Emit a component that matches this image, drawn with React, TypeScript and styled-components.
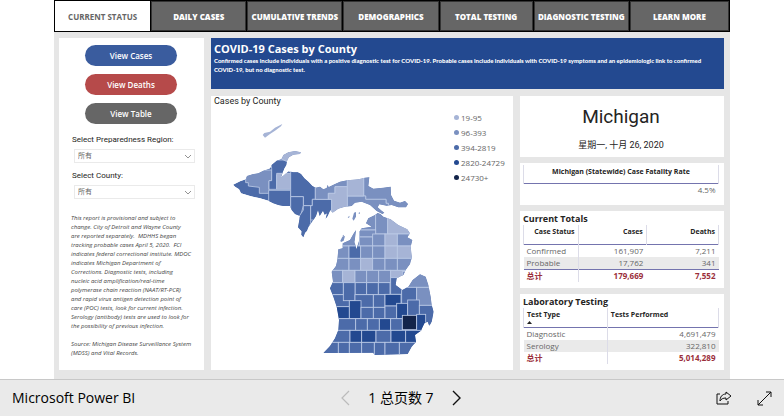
import React from "react";
import styled, { createGlobalStyle } from "styled-components";

const SANS = `"Open Sans", "Noto Sans", "Noto Sans CJK SC", sans-serif`;
const DIN = `Roboto, "Noto Sans CJK SC", sans-serif`;

const LEVELS = ["#a6b4d6", "#7a90c0", "#4c6ba9", "#234990", "#13244a"];

const GlobalStyle = createGlobalStyle`
  * { box-sizing: border-box; }
  body { margin: 0; background: #fff; font-family: ${SANS}; color: #252423; }
  button, select { font-family: inherit; margin: 0; cursor: pointer; }
  h1, h2, p, ul { margin: 0; padding: 0; }
`;

const Page = styled.div`
  display: flex;
  flex-direction: column;
  min-height: 100vh;
`;

const Report = styled.div`
  flex: 1;
  margin: 0 54px;
  background: #e6e6e6;
`;

const Tabs = styled.nav`
  display: grid;
  grid-template-columns: 95fr 95fr 95fr 95fr 93fr 95fr 99fr;
  gap: 1px;
  height: 32px;
  padding: 1px;
  background: #000;
`;

const Tab = styled.button<{ $active?: boolean }>`
  min-width: 0;
  border: 1px solid ${(p) => (p.$active ? "#fff" : "#333")};
  padding: 0;
  background: ${(p) => (p.$active ? "#fff" : "#666")};
  color: ${(p) => (p.$active ? "#666" : "#fff")};
  font-size: 8px;
  font-weight: ${(p) => (p.$active ? 700 : 800)};
  white-space: nowrap;
`;

const Main = styled.main`
  display: grid;
  grid-template-columns: 145fr 302fr 204fr;
  grid-template-rows: auto 1fr;
  gap: 7px;
  padding: 6px 6px 8px 5px;
`;

const Sidebar = styled.aside`
  grid-row: 1 / 3;
  display: flex;
  flex-direction: column;
  padding: 7px 9px 0 13px;
  background: #fff;
`;

const ViewButtons = styled.div`
  display: flex;
  flex-direction: column;
  gap: 8px;
  padding: 0 18px 0 13px;
`;

const ViewButton = styled.button<{ $color: string }>`
  height: 21px;
  border: 0;
  border-radius: 11px;
  padding: 0;
  background: ${(p) => p.$color};
  color: #fff;
  font-size: 8px;
  font-weight: 600;
`;

const Field = styled.div`
  display: flex;
  flex-direction: column;
  gap: 4px;
  margin-top: 8px;
`;

const FirstField = styled(Field)`
  margin-top: 11px;
`;

const FieldLabel = styled.label`
  font-family: ${DIN};
  font-size: 8px;
  line-height: 10px;
  color: #252423;
`;

const SelectBox = styled.div`
  display: grid;
  align-items: center;
  margin-left: 2px;
  & > * { grid-area: 1 / 1; }
  svg { justify-self: end; margin-right: 3px; pointer-events: none; }
`;

const Select = styled.select`
  appearance: none;
  width: 100%;
  height: 14px;
  border: 1px solid #eaeaea;
  border-radius: 0;
  padding: 0 3px;
  background: #fff;
  color: #666;
  font-size: 7px;
  line-height: 12px;
`;

const Notes = styled.p`
  margin-top: 15px;
  margin-right: -8px;
  margin-left: -1px;
  font-size: 6px;
  font-style: italic;
  line-height: 9px;
  color: #444;
  white-space: pre-line;

  & + & { margin-top: 9px; }
`;

const Banner = styled.header`
  grid-column: 2 / 4;
  min-height: 51px;
  padding: 4px 0 4px 3px;
  background: #234990;
  color: #fff;
`;

const BannerTitle = styled.h1`
  font-size: 11px;
  font-weight: 700;
  line-height: 14px;
`;

const BannerText = styled.p`
  font-family: Lato, ${SANS};
  font-size: 6px;
  font-weight: 900;
  line-height: 9px;
`;

const Term = styled.span`
  white-space: nowrap;
`;

const MapPanel = styled.section`
  padding: 0 3px;
  background: #fff;
`;

const MapTitle = styled.h2`
  font-family: ${DIN};
  font-size: 9px;
  font-weight: 400;
  line-height: 11px;
  color: #252423;
`;

const MapBody = styled.div`
  display: flex;
  gap: 14px;
  margin-top: 3px;
  padding-left: 11px;
`;

const Legend = styled.ul`
  list-style: none;
  font-size: 8px;
  line-height: 15px;
  color: #666;
  white-space: nowrap;
`;

const LegendItem = styled.li<{ $color: string }>`
  display: flex;
  align-items: center;
  gap: 2px;
  &::before {
    content: "";
    width: 5px;
    height: 5px;
    border-radius: 50%;
    background: ${(p) => p.$color};
  }
`;

const Cards = styled.div`
  display: flex;
  flex-direction: column;
  gap: 6px;
`;

const Card = styled.section<{ $height: number }>`
  min-height: ${(p) => p.$height}px;
  padding: 2px 5px 0 3px;
  background: #fff;
`;

const StateCard = styled(Card)`
  display: flex;
  flex-direction: column;
  align-items: center;
  padding-top: 9px;
  font-family: ${DIN};
`;

const StateName = styled.h2`
  font-size: 19px;
  font-weight: 400;
  line-height: 24px;
`;

const ReportDate = styled.p`
  margin-top: 9px;
  font-size: 9px;
  line-height: 14px;
`;

const CardTitle = styled.h2`
  font-size: 9px;
  font-weight: 700;
  line-height: 12px;
`;

const Table = styled.table`
  width: 100%;
  border-collapse: collapse;
  table-layout: fixed;
  font-size: 8px;
  line-height: 12px;
  color: #666;

  th, td { padding: 0 3px; text-align: right; font-weight: 400; }
  th:first-child { text-align: left; }
  th + td, th + th { border-left: 1px solid #dcdce8; }
`;

const HeadRow = styled.tr<{ $height: number }>`
  height: ${(p) => p.$height}px;
  border-bottom: 1px solid #7474ae;
  color: #252423;
  font-size: 7px;
  vertical-align: top;
  && th { font-weight: 700; }
  && th:first-child { border-left: 1px solid #dcdce8; }
  && th:last-child { border-right: 1px solid #dcdce8; }
`;

const HeadCell = styled.th<{ $align: string; $width?: string }>`
  width: ${(p) => p.$width ?? "auto"};
  &&& { text-align: ${(p) => p.$align}; padding-top: 1px; }
`;

const BodyRow = styled.tr<{ $shaded?: boolean }>`
  background: ${(p) => (p.$shaded ? "#eaeaea" : "transparent")};
`;

const TotalRow = styled.tr<{ $ruled?: boolean }>`
  border-top: ${(p) => (p.$ruled ? "1px solid #7474ae" : "0")};
  color: #9b2f3b;
  && th, && td { font-weight: 700; }
`;

const SortMark = styled.svg`
  display: block;
`;

const Footer = styled.footer`
  display: grid;
  grid-template-columns: 1fr auto 1fr;
  align-items: center;
  height: 37px;
  border-top: 1px solid #c8c8c8;
  padding: 0 12px;
  background: #eaeaea;
  color: #000;
`;

const Brand = styled.a`
  color: inherit;
  font-size: 14px;
  line-height: 18px;
  text-decoration: none;
`;

const Pager = styled.div`
  display: flex;
  align-items: center;
  gap: 18px;
  margin-left: 18px;
  font-size: 14px;
  line-height: 18px;
`;

const IconButton = styled.button`
  display: flex;
  border: 0;
  padding: 0;
  background: none;
`;

const Actions = styled.div`
  display: flex;
  justify-content: flex-end;
  gap: 25px;
`;

const UPPER =
  "M24 224 45 214 62 208 66 198 85 192 100 190 115 182 135 175 140 165 155 152 170 146 175 135 190 127 210 123 228 127 225 132 205 134 192 142 186 152 184 165 178 175 172 190 167 205 178 194 190 184 205 187 218 187 228 192 238 205 250 215 262 228 272 233 285 230 295 238 307 233 330 222 345 215 367 211 400 208 420 203 433 202 430 228 445 236 475 233 497 230 498 255 507 272 525 278 540 273 549 282 543 292 520 292 500 285 485 287 463 283 458 292 470 302 478 308 472 312 455 303 435 285 410 275 390 278 380 288 360 290 340 296 323 308 316 300 308 318 302 326 306 310 299 314 294 302 284 318 279 300 273 318 262 335 250 352 246 362 240 368 235 382 229 374 230 364 219 352 222 335 225 318 210 312 200 300 195 288 175 288 160 285 145 280 130 272 105 265 75 258 48 250 42 238 30 230Z";
const LOWER =
  "M450 315 458 309 466 312 475 320 497 328 520 345 547 358 555 370 547 382 562 390 557 410 561 445 558 450 555 462 542 480 535 495 515 505 512 525 532 540 550 530 563 510 585 493 602 500 610 525 617 560 620 585 626 605 620 635 613 648 608 635 598 640 588 662 570 675 573 695 560 710 548 732 448 735 445 728 295 729 315 708 330 685 340 660 342 630 335 590 325 560 315 535 324 515 320 485 335 465 330 480 337 450 340 418 353 415 353 400 375 390 385 372 393 360 390 385 386 410 389 396 394 418 403 390 403 365 410 355 440 350 423 340 430 325Z";
const ISLE_ROYALE = "M113 75 118 69 135 65 150 53 172 42 168 49 150 62 135 72 120 83Z";
const ISLANDS =
  "M382 326 387 308 393 306 393 320 386 332ZM368 322 374 317 372 324ZM346 392 352 380 360 378 356 392 348 396ZM305 234 307 224 312 232 306 238ZM400 310 404 306 405 312ZM352 378 357 374 356 380Z";

const UPPER_COUNTIES: [number, string][] = [
  [1, "M62 180H140V212H132V250H103V232L70 228V218H62Z"],
  [2, "M136 150H190L172 205 155 195V238H132V212H140V175Z"],
  [0, "M168 146 186 155 240 135V115H165Z"],
  [0, "M155 190H205V205H197V238H155Z"],
  [2, "M131 241H197V300H131Z"],
  [2, "M197 180H271V268H262V287H235V260H197Z"],
  [2, "M197 260H235V287L225 325H197Z"],
  [2, "M235 287H257V340L235 390H215V330L235 300Z"],
  [2, "M262 268H320V330H257V287H262Z"],
  [1, "M271 200H367V230H330V250H310V268H271Z"],
  [1, "M416 200H560V300H490V280H483V268H422V258H416Z"],
  [1, "M367 258H422V268H483V280H490V320H367Z"],
  [0, "M310 250H330V230H367V290L320 315V268H310Z"],
  [0, "M367 200H416V258H367Z"],
];

// Each entry: legend level, left, top, width, height.
const LOWER_COUNTIES: [number, number, number, number, number][] = [
  [1, 403, 300, 49, 60], [1, 452, 300, 36, 72], [0, 488, 320, 80, 52],
  [1, 403, 360, 49, 21], [1, 340, 355, 63, 53], [1, 403, 381, 40, 27],
  [1, 443, 372, 37, 36], [0, 480, 372, 37, 36], [1, 517, 372, 50, 36],
  [1, 335, 408, 37, 37], [2, 372, 408, 35, 37], [1, 407, 408, 36, 37],
  [1, 443, 408, 37, 37], [0, 480, 408, 37, 37], [0, 517, 408, 50, 37],
  [1, 315, 445, 57, 36], [1, 372, 445, 35, 36], [0, 407, 445, 36, 36],
  [1, 443, 445, 37, 36], [1, 480, 445, 37, 36], [1, 517, 445, 50, 36],
  [1, 310, 481, 43, 37], [0, 353, 481, 37, 37], [1, 390, 481, 35, 37],
  [1, 425, 481, 36, 37], [1, 461, 481, 36, 37], [0, 497, 481, 50, 22],
  [2, 310, 518, 45, 36], [2, 390, 518, 35, 36], [2, 425, 518, 35, 36],
  [2, 460, 518, 35, 36], [2, 497, 503, 34, 50], [2, 320, 554, 53, 36],
  [2, 355, 518, 35, 54], [2, 390, 554, 55, 38], [2, 445, 554, 35, 38],
  [3, 480, 553, 48, 35], [1, 532, 485, 80, 47], [2, 530, 532, 45, 56],
  [1, 575, 532, 50, 54], [3, 330, 590, 43, 36], [3, 373, 572, 35, 54],
  [2, 408, 592, 37, 34], [2, 445, 592, 35, 34], [2, 480, 588, 35, 38],
  [3, 515, 580, 33, 46], [2, 548, 570, 35, 56], [2, 583, 586, 45, 60],
  [2, 330, 626, 62, 35], [2, 392, 626, 35, 35], [2, 427, 626, 36, 35],
  [3, 463, 626, 34, 35], [2, 497, 626, 35, 35], [4, 532, 616, 43, 43],
  [3, 575, 613, 27, 50], [2, 310, 661, 65, 36], [3, 375, 661, 35, 36],
  [3, 410, 661, 43, 36], [2, 453, 661, 45, 36], [3, 498, 661, 44, 36],
  [3, 542, 661, 48, 40], [2, 285, 697, 55, 40], [2, 340, 697, 33, 40],
  [2, 373, 697, 37, 40], [2, 410, 697, 38, 40], [2, 448, 697, 32, 40],
  [2, 480, 697, 43, 40], [2, 523, 697, 60, 40],
];

const LEGEND = ["19-95", "96-393", "394-2819", "2820-24729", "24730+"];
const TABS = [
  "CURRENT STATUS",
  "DAILY CASES",
  "CUMULATIVE TRENDS",
  "DEMOGRAPHICS",
  "TOTAL TESTING",
  "DIAGNOSTIC TESTING",
  "LEARN MORE",
];

const MichiganMap = () => (
  <svg width="215" height="257" viewBox="0 0 645 771" role="img" aria-label="Cases by County">
    <defs>
      <clipPath id="upper"><path d={UPPER} /></clipPath>
      <clipPath id="lower"><path d={LOWER} /></clipPath>
    </defs>
    <path d={ISLANDS} fill={LEVELS[1]} />
    <path d={ISLE_ROYALE} fill={LEVELS[0]} />
    <g clipPath="url(#upper)" stroke="#bccae6" strokeWidth="2.5">
      <path d={UPPER} fill={LEVELS[2]} stroke="none" />
      {UPPER_COUNTIES.map(([level, d]) => (
        <path key={d} d={d} fill={LEVELS[level]} />
      ))}
    </g>
    <g clipPath="url(#lower)" stroke="#bccae6" strokeWidth="2.5">
      <path d={LOWER} fill={LEVELS[2]} stroke="none" />
      {LOWER_COUNTIES.map(([level, x, y, w, h]) => (
        <rect key={`${x}-${y}`} x={x} y={y} width={w} height={h} fill={LEVELS[level]} />
      ))}
    </g>
  </svg>
);

const Dropdown = ({ id }: { id: string }) => (
  <SelectBox>
    <Select id={id} defaultValue="all">
      <option value="all">所有</option>
    </Select>
    <svg width="8" height="5" viewBox="0 0 8 5" fill="none" stroke="#777" strokeWidth="0.8">
      <path d="M1 1 4 4 7 1" />
    </svg>
  </SelectBox>
);

export default function App() {
  return (
    <Page>
      <GlobalStyle />
      <Report>
        <Tabs>
          {TABS.map((name, i) => (
            <Tab key={name} $active={i === 0}>{name}</Tab>
          ))}
        </Tabs>
        <Main>
          <Sidebar>
            <ViewButtons>
              <ViewButton $color="#3a5c9e">View Cases</ViewButton>
              <ViewButton $color="#b64a4a">View Deaths</ViewButton>
              <ViewButton $color="#666">View Table</ViewButton>
            </ViewButtons>
            <FirstField>
              <FieldLabel htmlFor="region">Select Preparedness Region:</FieldLabel>
              <Dropdown id="region" />
            </FirstField>
            <Field>
              <FieldLabel htmlFor="county">Select County:</FieldLabel>
              <Dropdown id="county" />
            </Field>
            <Notes>
              {`This report is provisional and subject to
              change. City of Detroit and Wayne County
              are reported separately.\u00a0 MDHHS began
              tracking probable cases April 5, 2020.\u00a0 FCI
              indicates federal correctional institute. MDOC
              indicates Michigan Department of
              Corrections. Diagnostic tests, including
              nucleic acid amplification/real-time
              polymerase chain reaction (NAAT/RT-PCR)
              and rapid virus antigen detection point of
              care (POC) tests, look for current infection.
              Serology (antibody) tests are used to look for
              the possibility of previous infection.`}
            </Notes>
            <Notes>
              {`Source: Michigan Disease Surveillance System
              (MDSS) and Vital Records.`}
            </Notes>
          </Sidebar>

          <Banner>
            <BannerTitle>COVID-19 Cases by County</BannerTitle>
            <BannerText>
              Confirmed cases include individuals with a positive diagnostic test for COVID-19.
              Probable cases include individuals with COVID-19 symptoms and an epidemiologic link
              to confirmed <Term>COVID-19,</Term> but no diagnostic test.
            </BannerText>
          </Banner>

          <MapPanel>
            <MapTitle>Cases by County</MapTitle>
            <MapBody>
              <MichiganMap />
              <Legend>
                {LEGEND.map((range, i) => (
                  <LegendItem key={range} $color={LEVELS[i]}>{range}</LegendItem>
                ))}
              </Legend>
            </MapBody>
          </MapPanel>

          <Cards>
            <StateCard $height={61}>
              <StateName>Michigan</StateName>
              <ReportDate>星期一, 十月 26, 2020</ReportDate>
            </StateCard>
            <Card $height={42}>
              <Table>
                <thead>
                  <HeadRow $height={18}>
                    <HeadCell $align="center">Michigan (Statewide) Case Fatality Rate</HeadCell>
                  </HeadRow>
                </thead>
                <tbody>
                  <BodyRow><td>4.5%</td></BodyRow>
                </tbody>
              </Table>
            </Card>
            <Card $height={77}>
              <CardTitle>Current Totals</CardTitle>
              <Table>
                <thead>
                  <HeadRow $height={19}>
                    <HeadCell $align="right" $width="28%">Case Status</HeadCell>
                    <HeadCell $align="right" $width="35%">Cases</HeadCell>
                    <HeadCell $align="right">Deaths</HeadCell>
                  </HeadRow>
                </thead>
                <tbody>
                  <BodyRow><th>Confirmed</th><td>161,907</td><td>7,211</td></BodyRow>
                  <BodyRow $shaded><th>Probable</th><td>17,762</td><td>341</td></BodyRow>
                  <TotalRow $ruled><th>总计</th><td>179,669</td><td>7,552</td></TotalRow>
                </tbody>
              </Table>
            </Card>
            <Card $height={76}>
              <CardTitle>Laboratory Testing</CardTitle>
              <Table>
                <thead>
                  <HeadRow $height={19}>
                    <HeadCell $align="left" $width="43%">
                      Test Type
                      <SortMark width="5" height="3" viewBox="0 0 5 3">
                        <path d="M0 3 2.5 0 5 3Z" fill="#222" />
                      </SortMark>
                    </HeadCell>
                    <HeadCell $align="left">Tests Performed</HeadCell>
                  </HeadRow>
                </thead>
                <tbody>
                  <BodyRow><th>Diagnostic</th><td>4,691,479</td></BodyRow>
                  <BodyRow $shaded><th>Serology</th><td>322,810</td></BodyRow>
                  <TotalRow><th>总计</th><td>5,014,289</td></TotalRow>
                </tbody>
              </Table>
            </Card>
          </Cards>
        </Main>
      </Report>

      <Footer>
        <Brand href="#">Microsoft Power BI</Brand>
        <Pager>
          <IconButton aria-label="Previous page">
            <svg width="10" height="16" viewBox="0 0 10 16" fill="none" stroke="#bbb" strokeWidth="1.2">
              <path d="M9 1 2 8 9 15" />
            </svg>
          </IconButton>
          <span>1 总页数 7</span>
          <IconButton aria-label="Next page">
            <svg width="10" height="16" viewBox="0 0 10 16" fill="none" stroke="#111" strokeWidth="1.4">
              <path d="M1 1 8 8 1 15" />
            </svg>
          </IconButton>
        </Pager>
        <Actions>
          <IconButton aria-label="Share">
            <svg width="16" height="14" viewBox="0 0 16 14" fill="none" stroke="#111">
              <path d="M4 3H1V13H12V10M10 1 15 5 10 9V7C7 7 5 8 4 10 4 6 6 3 10 3Z" />
            </svg>
          </IconButton>
          <IconButton aria-label="Full screen">
            <svg width="15" height="15" viewBox="0 0 15 15" fill="none" stroke="#111">
              <path d="M1 14 14 1M9 1H14V6M1 9V14H6" />
            </svg>
          </IconButton>
        </Actions>
      </Footer>
    </Page>
  );
}
